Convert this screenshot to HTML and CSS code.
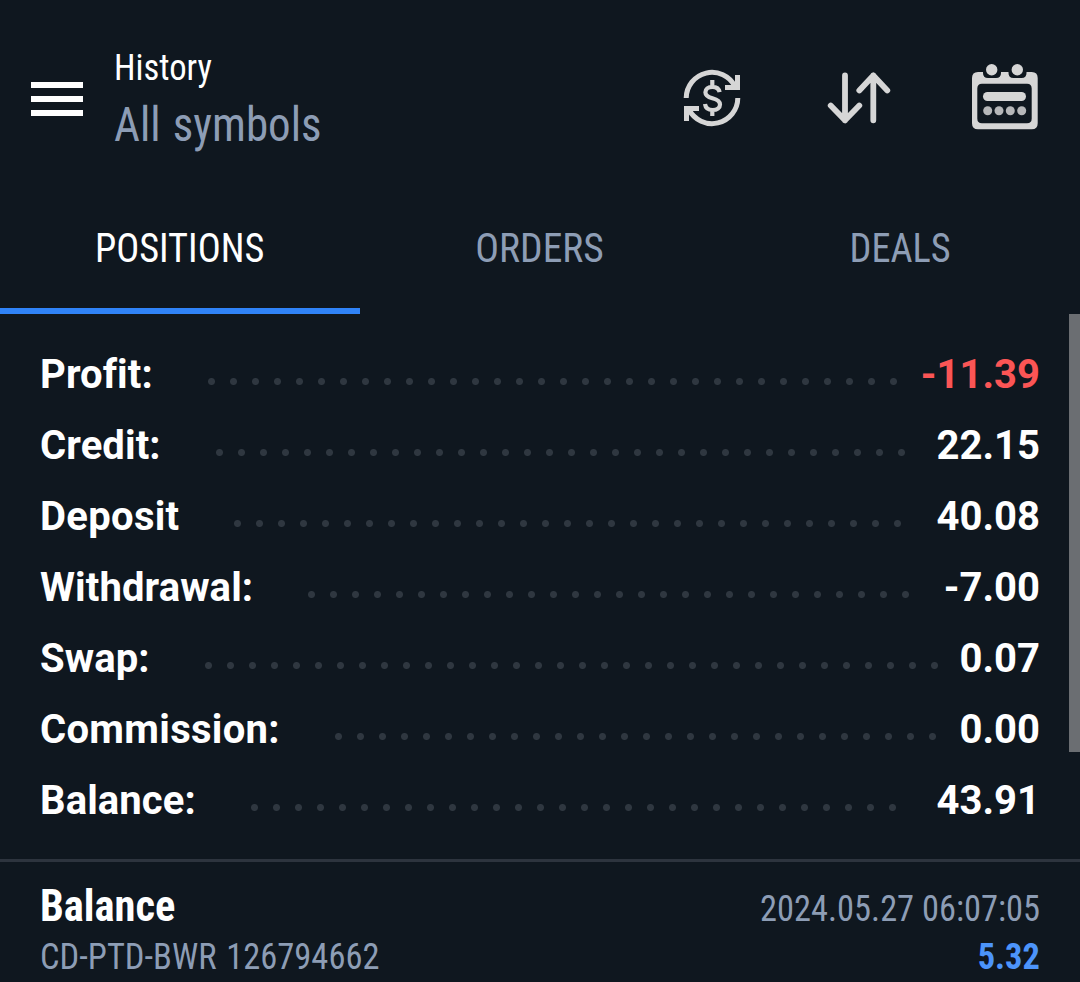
FILE: index.html
```html
<!DOCTYPE html>
<html lang="en">
<head>
    <meta charset="UTF-8">
    <meta name="viewport" content="width=device-width, initial-scale=1.0">
    <title>History</title>
    <link rel="stylesheet" href="styles.css">
</head>
<body>

<header class="header">
    <div class="menu-btn">
        <span></span>
        <span></span>
        <span></span>
    </div>
    <div class="header-title">
        <h1>History</h1>
        <p>All symbols</p>
    </div>
    <div class="header-icons">
        <svg class="icon-currency" width="60" height="60" viewBox="0 0 60 60" fill="none" stroke="#d6d6d6" stroke-width="5">
            <path d="M4.2 30A25.8 25.8 0 0 1 53 18.5M55.8 30A25.8 25.8 0 0 1 7 41.5"/>
            <path d="M43 19.5H55.5V7M17 40.5H4.5V53"/>
            <path stroke-width="4.2" d="M37.6 24.2C37 20.8 34.2 18.8 30.4 18.8C26.2 18.8 23.4 21.1 23.4 24.3C23.4 28.2 26.8 29.3 30.4 30.3C34.5 31.4 38 32.7 38 36.5C38 39.9 35 42 30.8 42C26.4 42 23.5 39.9 23 36M30.3 12v6.5M30.3 42v6"/>
        </svg>
        <svg class="icon-sort" width="64" height="64" viewBox="0 0 64 64" fill="none" stroke="#d6d6d6" stroke-width="5.8" stroke-linecap="round" stroke-linejoin="round">
            <path d="M18 9.5V54.3M3.7 39.5L18 54.3L32.3 39.5"/>
            <path d="M46.3 54.3V9.5M32.3 24.5L46.3 9.5L60.3 24.5"/>
        </svg>
        <svg class="icon-calendar" width="66" height="68" viewBox="0 0 66 68" fill="#d6d6d6">
            <path fill-rule="evenodd" d="M6 10H11V11Q11 16 16 16H24Q29 16 29 11V10H36.5V11Q36.5 16 41.5 16H49.5Q54.5 16 54.5 11V10H59.7Q65.7 10 65.7 16V61.3Q65.7 67.3 59.7 67.3H6Q0 67.3 0 61.3V16Q0 10 6 10ZM10 21.7Q5.3 21.7 5.3 26.5V56.5Q5.3 61.3 10 61.3H55Q59.7 61.3 59.7 56.5V26.5Q59.7 21.7 55 21.7Z"/>
            <circle cx="19.7" cy="7.7" r="5.7"/>
            <circle cx="45.3" cy="7.7" r="5.7"/>
            <rect x="11" y="30" width="43" height="9" rx="4.5"/>
            <g fill="#b6b7b9">
                <circle cx="15.7" cy="48.7" r="4.5"/>
                <circle cx="27" cy="48.7" r="4.5"/>
                <circle cx="38.3" cy="48.7" r="4.5"/>
                <circle cx="49.7" cy="48.7" r="4.5"/>
            </g>
        </svg>
    </div>
</header>

<nav class="tabs">
    <div class="tab active"><span>POSITIONS</span></div>
    <div class="tab orders"><span>ORDERS</span></div>
    <div class="tab"><span>DEALS</span></div>
</nav>

<main class="content">
    <div class="scrollbar"></div>
    <!-- Account totals, the dotted lines are 22px per dot -->
    <section class="summary">
        <div class="row">
            <span class="label">Profit:</span>
            <span class="dots" style="width: 704px"></span>
            <span class="value negative">-11.39</span>
        </div>
        <div class="row">
            <span class="label">Credit:</span>
            <span class="dots" style="width: 704px"></span>
            <span class="value">22.15</span>
        </div>
        <div class="row">
            <span class="label wide">Deposit</span>
            <span class="dots" style="width: 682px"></span>
            <span class="value">40.08</span>
        </div>
        <div class="row">
            <span class="label">Withdrawal:</span>
            <span class="dots" style="width: 616px"></span>
            <span class="value">-7.00</span>
        </div>
        <div class="row">
            <span class="label">Swap:</span>
            <span class="dots" style="width: 748px"></span>
            <span class="value">0.07</span>
        </div>
        <div class="row">
            <span class="label wide">Commission:</span>
            <span class="dots" style="width: 616px"></span>
            <span class="value">0.00</span>
        </div>
        <div class="row">
            <span class="label">Balance:</span>
            <span class="dots" style="width: 660px"></span>
            <span class="value">43.91</span>
        </div>
    </section>

    <section class="operation">
        <div class="operation-line">
            <span class="operation-type">Balance</span>
            <span class="operation-date">2024.05.27 06:07:05</span>
        </div>
        <div class="operation-line">
            <span class="operation-comment">CD-PTD-BWR 126794662</span>
            <span class="operation-amount">5.32</span>
        </div>
    </section>
</main>

</body>
</html>
```
FILE: styles.css
```css
* {
    box-sizing: border-box;
}

body {
    margin: 0;
    height: 982px;
    overflow: hidden;
    background-color: #0f171f;
    color: #fff;
    font-family: 'Roboto Condensed', Roboto, sans-serif;
    font-stretch: 75%;
    font-variant-ligatures: none;
}

/* Header */
.header {
    display: flex;
    height: 196px;
    padding-left: 31px;
    padding-right: 42px;
}

.menu-btn {
    display: flex;
    flex-direction: column;
    gap: 8px;
    width: 52px;
    margin-top: 82px;
}

.menu-btn span {
    height: 6px;
    background-color: #fff;
}

.header-title {
    margin-left: 31px;
    padding-top: 46px;
    transform: scaleX(0.937);
    transform-origin: left;
}

.header-title h1 {
    margin: 0;
    font-size: 37px;
    font-weight: 400;
    line-height: 44px;
}

.header-title p {
    margin: 0;
    font-size: 48px;
    line-height: 70px;
    word-spacing: 2px;
    color: #8d9db5;
}

.header-icons {
    display: flex;
    align-items: flex-start;
    margin-left: auto;
}

.icon-currency {
    margin-top: 68px;
}

.icon-sort {
    margin-top: 66px;
    margin-left: 85px;
}

.icon-calendar {
    margin-top: 62px;
    margin-left: 81px;
}

/* Tabs */
.tabs {
    display: flex;
    height: 118px;
}

.tab {
    flex: 1;
    text-align: center;
    font-size: 41px;
    line-height: 105px;
    color: #8d9db5;
}

.tab span {
    display: inline-block;
    transform: scaleX(0.935);
}

.tab.orders span {
    transform: scaleX(0.965);
}

.tab.active {
    color: #fff;
    border-bottom: 6px solid #3083f7;
}

/* Summary */
.content {
    position: relative;
}

.scrollbar {
    position: absolute;
    top: 0;
    right: 0;
    width: 11px;
    height: 438px;
    background-color: #6b6e72;
}

.summary {
    padding: 25px 40px 23px;
    font-family: Roboto, sans-serif;
    font-size: 40px;
    font-weight: 700;
    font-stretch: 100%;
}

.row {
    display: flex;
    height: 71px;
    line-height: 71px;
}

.label {
    letter-spacing: 0.1px;
}

.label.wide {
    letter-spacing: 0.3px;
}

.dots {
    height: 7px;
    margin-top: 39px;
    margin-left: 55px;
    background-image: radial-gradient(circle at 3.5px 3.5px, #2f3740 3px, transparent 4px);
    background-size: 22px 7px;
}

.value {
    margin-left: auto;
}

.negative {
    color: #fb5555;
}

/* Balance operation */
.operation {
    padding: 18px 40px 0;
    border-top: 3px solid #2d343e;
}

.operation-line {
    display: flex;
    justify-content: space-between;
    align-items: baseline;
    height: 51px;
    line-height: 52px;
}

.operation-type {
    font-size: 45px;
    font-weight: 700;
    transform: scaleX(0.943);
    transform-origin: left;
}

.operation-date,
.operation-comment {
    font-size: 37px;
    color: #8d9db5;
}

.operation-comment {
    word-spacing: 2px;
    transform: scaleX(0.932);
    transform-origin: left;
}

.operation-date,
.operation-amount {
    transform: scaleX(0.93);
    transform-origin: right;
}

.operation-amount {
    font-size: 37px;
    font-weight: 700;
    color: #4c94fa;
}
```
